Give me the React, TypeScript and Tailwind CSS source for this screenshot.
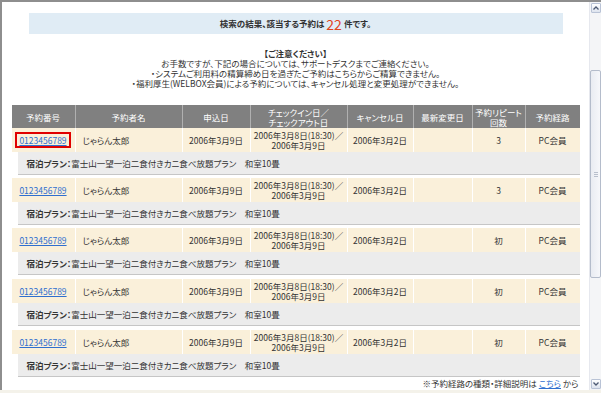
import React from "react";

const cols = "grid grid-cols-[64px_107px_68px_97px_66px_59px_53px_54px]";

type Row = { repeat: string; boxed?: boolean; gap: string };
const rows: Row[] = [
  { repeat: "3", boxed: true, gap: "mt-0" },
  { repeat: "3", gap: "mt-[3px]" },
  { repeat: "初", gap: "mt-[3px]" },
  { repeat: "初", gap: "mt-[4px]" },
  { repeat: "初", gap: "mt-[4px]" },
];

function Scrollbar() {
  return (
    <div className="w-[12px] flex flex-col bg-[#f4f5f7] border-l border-[#e6e8ee] pt-[1px]">
      <div className="mx-[1px] h-[10px] w-[10px] border border-[#b9c3d6] rounded-[1px] bg-gradient-to-b from-[#ffffff] to-[#dde3ee] flex items-center justify-center">
        <svg width="6" height="4" viewBox="0 0 6 4">
          <path d="M0.5 3.5 L3 1 L5.5 3.5" stroke="#4d5a73" strokeWidth="1.3" fill="none" />
        </svg>
      </div>
      <div className="flex-1 relative">
        <div className="absolute left-[0px] top-[57px] w-[11px] h-[208px] border border-[#b4bccb] rounded-[2px] bg-gradient-to-r from-[#e9ecf2] to-[#f6f7fa] flex items-center justify-center">
          <div className="flex flex-col gap-[1px]">
            <div className="w-[4px] h-[1px] bg-[#b8bfcc]" />
            <div className="w-[4px] h-[1px] bg-[#b8bfcc]" />
            <div className="w-[4px] h-[1px] bg-[#b8bfcc]" />
          </div>
        </div>
      </div>
      <div className="mx-[1px] mb-[1px] h-[10px] w-[10px] border border-[#b9c3d6] rounded-[1px] bg-gradient-to-b from-[#ffffff] to-[#dde3ee] flex items-center justify-center">
        <svg width="6" height="4" viewBox="0 0 6 4">
          <path d="M0.5 0.5 L3 3 L5.5 0.5" stroke="#4d5a73" strokeWidth="1.3" fill="none" />
        </svg>
      </div>
    </div>
  );
}

export default function App() {
  return (
    <div
      className="w-[601px] h-[393px] overflow-hidden bg-white flex flex-col border-t-2 border-[#8e8e8e] text-[#333] [font-feature-settings:'palt']"
      style={{ fontFamily: "'Noto Sans CJK JP', 'Noto Sans', sans-serif" }}
    >
      <div className="flex flex-1 min-h-0">
        <div className="flex-1 border-l-2 border-[#8e8e8e] flex flex-col">
          <div className="mt-[11px] mx-auto w-[534px] h-[21px] bg-[#e0ecf5] flex items-center justify-center text-[8.5px] font-bold text-[#333]">
            <span>検索の結果、該当する予約は</span>
            <span className="text-[14px] font-normal text-[#e0441c] mx-[2px] leading-none">22</span>
            <span>件です。</span>
          </div>

          <div className="mt-[14px] text-center text-[8.5px] leading-[10px] text-[#333]">
            <div className="font-bold">【ご注意ください】</div>
            <div>お手数ですが、下記の場合については、サポートデスクまでご連絡ください。</div>
            <div>・システムご利用料の精算締め日を過ぎたご予約はこちらからご精算できません。</div>
            <div>・福利厚生(WELBOX会員)による予約については、キャンセル処理と変更処理ができません。</div>
          </div>

          <div className="mt-[17px] mx-auto w-[568px] text-[8.5px]">
            <div className={`${cols} h-[23px] bg-[#808080] text-white leading-[10px]`}>
              <div className="border-r border-[#b0b0b0] flex items-center justify-center">予約番号</div>
              <div className="border-r border-[#b0b0b0] flex items-center justify-center">予約者名</div>
              <div className="border-r border-[#b0b0b0] flex items-center justify-center">申込日</div>
              <div className="border-r border-[#b0b0b0] flex flex-col items-center justify-center">
                <span>チェックイン日／</span>
                <span>チェックアウト日</span>
              </div>
              <div className="border-r border-[#b0b0b0] flex items-center justify-center">キャンセル日</div>
              <div className="border-r border-[#b0b0b0] flex items-center justify-center">最新変更日</div>
              <div className="border-r border-[#b0b0b0] flex flex-col items-center justify-center">
                <span>予約リピート</span>
                <span>回数</span>
              </div>
              <div className="flex items-center justify-center">予約経路</div>
            </div>

            {rows.map((r, i) => (
              <div key={i} className={r.gap}>
                <div className={`${cols} h-[24px] bg-[#faf0da] text-[#333] leading-[10px]`}>
                  <div className="border-r border-white flex items-center justify-center">
                    {r.boxed ? (
                      <span className="border-2 border-[#e00000] px-[2px] py-[1px] text-[#2f6fcf] underline">0123456789</span>
                    ) : (
                      <span className="text-[#2f6fcf] underline">0123456789</span>
                    )}
                  </div>
                  <div className="border-r border-white flex items-center pl-[7px]">じゃらん太郎</div>
                  <div className="border-r border-white flex items-center justify-center">2006年3月9日</div>
                  <div className="border-r border-white flex flex-col items-center justify-center">
                    <span>2006年3月8日(18:30)／</span>
                    <span>2006年3月9日</span>
                  </div>
                  <div className="border-r border-white flex items-center justify-center">2006年3月2日</div>
                  <div className="border-r border-white" />
                  <div className="border-r border-white flex items-center justify-center">{r.repeat}</div>
                  <div className="flex items-center justify-center">PC会員</div>
                </div>
                <div className="ml-[6px] h-[23px] bg-[#ececec] border-b border-[#c6c6c6] flex items-center pl-[9px] text-[#333]">
                  <span className="font-bold">宿泊プラン：</span>
                  <span>富士山一望一泊二食付きカニ食べ放題プラン　和室10畳</span>
                </div>
              </div>
            ))}

            <div className="mt-[1px] text-right text-[8.5px] leading-[10px] pr-[1px]">
              ※予約経路の種類・詳細説明は <span className="text-[#2f6fcf] underline">こちら</span> から
            </div>
          </div>
        </div>
        <Scrollbar />
      </div>
      <div className="h-[3px] bg-[#f4f2ea]" />
    </div>
  );
}
